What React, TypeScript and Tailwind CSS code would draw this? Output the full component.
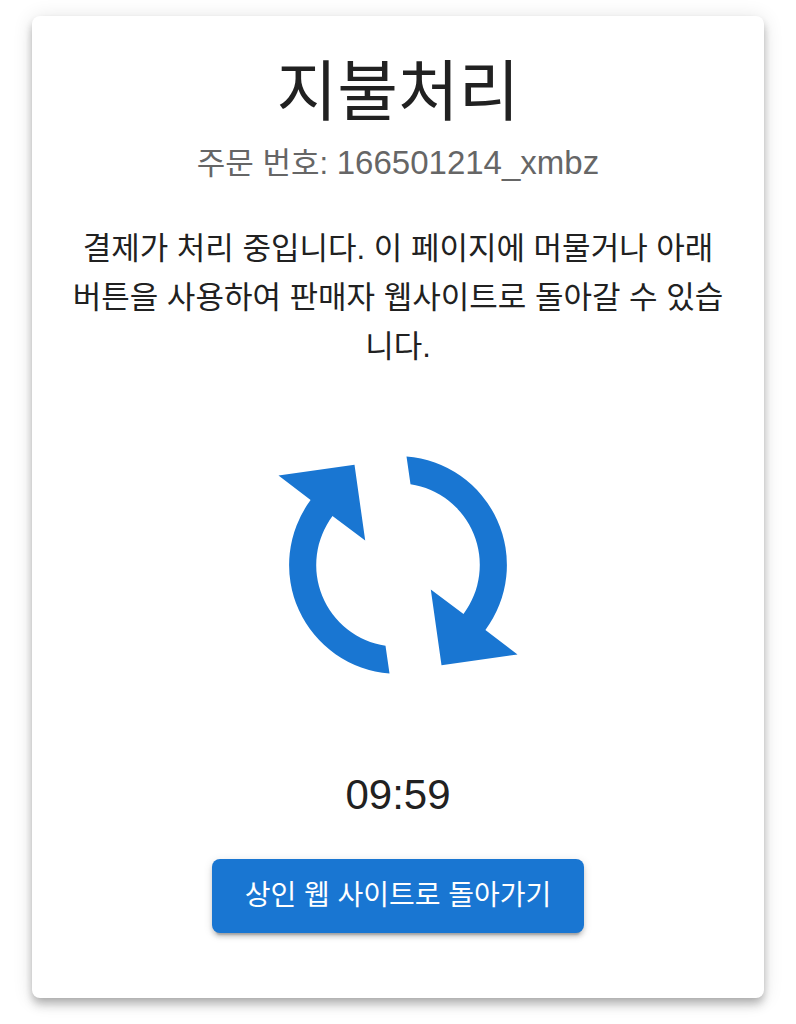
function SyncIcon() {
  return (
    <svg viewBox="-120 -110 240 220" className="h-[220px] w-60 text-[#1976d2]" fill="currentColor" aria-hidden="true">
      <path d="M-119.5 -89.5 L-43.5 -100.2 L-32.8 -24.5 L-65.5 -48.9 A81.7 81.7 0 0 0 -12.5 80.8 L-8.5 108.5 A108.8 108.8 0 0 1 -87.4 -64.9 Z" />
      <path d="M119.5 89.5 L43.5 100.2 L32.8 24.5 L65.5 48.9 A81.7 81.7 0 0 0 12.5 -80.8 L8.5 -108.5 A108.8 108.8 0 0 1 87.4 64.9 Z" />
    </svg>
  );
}

function PaymentCard({ orderId, timeLeft }: { orderId: string; timeLeft: string }) {
  return (
    <section className="flex flex-col items-center rounded-lg bg-white px-9 pt-9 pb-[65px] text-center text-[#212121] shadow-[0_4px_8px_-2px_rgba(0,0,0,0.2),0_8px_10px_0_rgba(0,0,0,0.14),0_2px_20px_0_rgba(0,0,0,0.12)]">
      <h1 className="text-[66px] leading-[80px]">지불처리</h1>
      <p className="mt-1.5 text-[31px] leading-[49px] text-[#666666]">
        주문 번호: <span className="text-[33px]">{orderId}</span>
      </p>
      <p className="mt-9 text-[31px] leading-[49px]">
        결제가 처리 중입니다. 이 페이지에 머물거나 아래 버튼을 사용하여 판매자 웹사이트로 돌아갈 수 있습니다.
      </p>
      <div className="py-[84px]">
        <SyncIcon />
      </div>
      <p className="mt-3 text-[42px] leading-[48px]" role="timer">
        {timeLeft}
      </p>
      <button
        type="button"
        className="mt-10 cursor-pointer rounded-lg bg-[#1976d2] px-[33px] py-4 text-[28px] leading-[42px] text-white shadow-[0_6px_2px_-4px_rgba(0,0,0,0.2),0_4px_4px_0_rgba(0,0,0,0.14),0_2px_10px_0_rgba(0,0,0,0.12)]"
      >
        상인 웹 사이트로 돌아가기
      </button>
    </section>
  );
}

export default function App() {
  return (
    <main className="min-h-screen bg-white px-8 pt-4 pb-6 font-['Liberation_Sans','Noto_Sans_CJK_KR',sans-serif]">
      <PaymentCard orderId="166501214_xmbz" timeLeft="09:59" />
    </main>
  );
}
